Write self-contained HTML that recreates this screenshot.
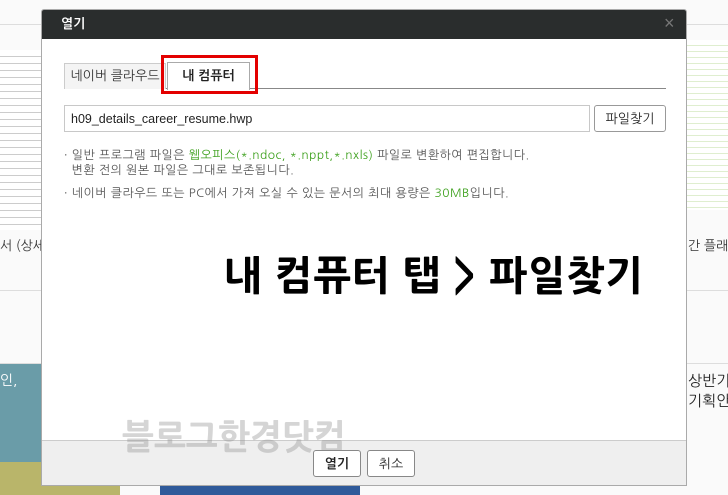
<!DOCTYPE html>
<html><head><meta charset="utf-8">
<style>
*{margin:0;padding:0;box-sizing:border-box}
body{width:728px;height:495px;overflow:hidden;background:#fff;position:relative;font-family:"Liberation Sans","Noto Sans CJK KR","NanumGothic",sans-serif}
.abs{position:absolute;white-space:nowrap}
.k{font-family:"NanumGothic","Noto Sans CJK KR",sans-serif}
</style></head><body>
<div class="abs" style="left:0;top:0;width:728px;height:495px;background:#fafafa"></div>
<div class="abs" style="left:0;top:24px;width:728px;height:1px;background:#ddd"></div>
<div class="abs" style="left:0;top:290px;width:728px;height:1px;background:#ddd"></div>
<div class="abs" style="left:0;top:363px;width:728px;height:1px;background:#ddd"></div>
<div class="abs" style="left:0;top:50px;width:41px;height:180px;background:repeating-linear-gradient(#fff 0 6px,#ccc 6px 7px)"></div>
<div class="abs" style="left:686px;top:40px;width:42px;height:170px;background:repeating-linear-gradient(#fff 0 5px,#dfeecf 5px 6px)"></div>
<div class="abs k" style="left:0;top:238px;font-size:13px;color:#333;width:41px;overflow:hidden">서 (상세</div>
<div class="abs k" style="left:688px;top:238px;font-size:13px;color:#333">간 플래너</div>
<div class="abs" style="left:0;top:364px;width:41px;height:131px;background:#6a9ca8"></div>
<div class="abs" style="left:0;top:462px;width:120px;height:33px;background:#b9b56a"></div>
<div class="abs k" style="left:0;top:372px;font-size:14px;color:#fff">인,</div>
<div class="abs k" style="left:688px;top:372px;font-size:15px;color:#222;line-height:20px">상반기<br>기획안</div>
<div class="abs" style="left:160px;top:485px;width:200px;height:10px;background:#2f5a9a"></div>
<div class="abs" style="left:41px;top:9px;width:646px;height:477px;background:#fff;border:1px solid #aaa;border-radius:3px 3px 0 0;overflow:hidden">
  <div class="abs" style="left:0;top:0;width:646px;height:29px;background:#2a2d2d"></div>
  <div class="abs k" style="left:19px;top:7px;color:#fff;font-size:13px;font-weight:bold">열기</div>
  <div class="abs" style="left:622px;top:3px;color:#777;font-size:18px">×</div>
  <div class="abs" style="left:22px;top:78px;width:602px;height:1px;background:#888"></div>
  <div class="abs k" style="left:22px;top:53px;width:102px;height:26px;background:#f4f4f4;border:1px solid #ccc;border-bottom:none;font-size:13px;color:#333;text-align:center;line-height:24px">네이버 클라우드</div>
  <div class="abs k" style="left:125px;top:52px;width:83px;height:28px;background:#fff;border:1px solid #aaa;border-bottom:none;font-size:13px;font-weight:bold;color:#222;text-align:center;line-height:26px">내 컴퓨터</div>
  <div class="abs" style="left:119px;top:45px;width:97px;height:39px;border:3px solid #e30000"></div>
  <div class="abs" style="left:22px;top:95px;width:526px;height:27px;border:1px solid #c8c8c8;font-size:12.5px;color:#222;padding:5px 6px;line-height:16px">h09_details_career_resume.hwp</div>
  <div class="abs k" style="left:552px;top:95px;width:72px;height:27px;border:1px solid #999;border-radius:3px;font-size:13px;color:#222;text-align:center;line-height:25px">파일찾기</div>
  <div class="abs k" style="left:22px;top:138px;font-size:12px;letter-spacing:0.45px;color:#555;line-height:15px">· 일반 프로그램 파일은 <span style="color:#3ca01c">웹오피스(*.ndoc, *.nppt,*.nxls)</span> 파일로 변환하여 편집합니다.<br>&nbsp;&nbsp;변환 전의 원본 파일은 그대로 보존됩니다.</div>
  <div class="abs k" style="left:22px;top:176px;font-size:12px;letter-spacing:0.45px;color:#555;line-height:15px">· 네이버 클라우드 또는 PC에서 가져 오실 수 있는 문서의 최대 용량은 <span style="color:#3ca01c">30MB</span>입니다.</div>
  <div class="abs k" style="left:182px;top:243px;font-size:40px;font-weight:900;color:#000;letter-spacing:1px;line-height:46px">내 컴퓨터 탭 &gt; 파일찾기</div>
  <div class="abs" style="left:0;top:430px;width:646px;height:47px;background:#efefef;border-top:1px solid #ccc"></div>
  <div class="abs k" style="left:80px;top:410px;font-size:34px;font-weight:900;color:rgba(150,150,150,0.4)">블로그한경닷컴</div>
  <div class="abs k" style="left:271px;top:440px;width:48px;height:27px;background:#fff;border:1px solid #888;border-radius:3px;font-size:13px;font-weight:bold;text-align:center;line-height:25px;color:#222">열기</div>
  <div class="abs k" style="left:325px;top:440px;width:48px;height:27px;background:#fff;border:1px solid #888;border-radius:3px;font-size:13px;text-align:center;line-height:25px;color:#222">취소</div>
</div>
</body></html>
